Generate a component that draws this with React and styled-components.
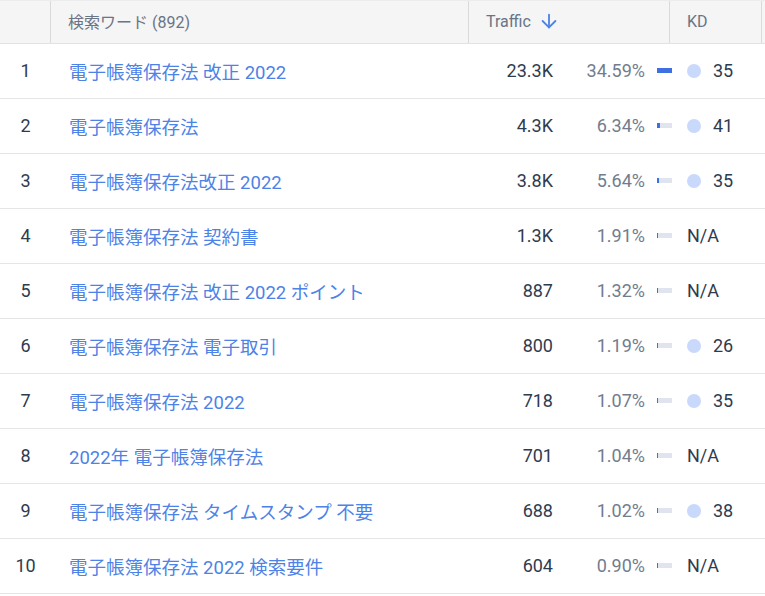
import React from 'react';
import styled, { createGlobalStyle } from 'styled-components';
import { ArrowDown } from 'lucide-react';

const GlobalStyle = createGlobalStyle`
  body {
    margin: 0;
    background: #fff;
    font-family: Roboto, "Noto Sans CJK JP", sans-serif;
  }
`;

const Table = styled.div`
  width: 765px;
  font-family: Roboto, "Noto Sans CJK JP", sans-serif;
`;

const HeaderRow = styled.div`
  display: grid;
  grid-template-columns: 51px 418px 201px 92px 1fr;
  height: 44px;
  box-sizing: border-box;
  background: #f5f5f5;
  border-top: 1px solid #ececec;
  border-bottom: 1px solid #e2e2e2;
`;

const HeadCell = styled.div`
  display: flex;
  align-items: center;
  gap: 7px;
  padding-left: 17px;
  padding-bottom: 2px;
  border-right: ${(p) => (p.$last ? 'none' : '1px solid #dadada')};
  font-size: 16px;
  font-weight: 400;
  color: #6a7484;
`;

const Row = styled.div`
  display: grid;
  grid-template-columns: 51px 1fr 84px 92px 42px 78px;
  align-items: center;
  height: 55px;
  box-sizing: border-box;
  padding-bottom: 1px;
  border-bottom: 1px solid #e6e6e6;
  font-size: 18.5px;
`;

const Num = styled.div`
  text-align: center;
  color: #2f3b4e;
  font-size: 18px;
`;

const Keyword = styled.a`
  padding-left: 18px;
  color: #4d82e6;
  text-decoration: none;
  white-space: nowrap;
`;

const Traffic = styled.div`
  text-align: right;
  color: #2f3b4e;
  font-size: 18px;
`;

const Pct = styled.div`
  text-align: right;
  color: #717d8e;
  font-size: 18px;
`;

const BarCell = styled.div`
  padding-left: 12px;
  display: flex;
  align-items: center;
`;

const Bar = styled.div`
  width: 15px;
  height: 5px;
  background: #dfe4ee;
  display: flex;
`;

const BarFill = styled.div`
  height: 100%;
  background: #3e70e2;
`;

const Kd = styled.div`
  display: flex;
  align-items: center;
  gap: 12px;
  color: #2f3b4e;
  font-size: 18px;
`;

const Dot = styled.span`
  width: 14px;
  height: 14px;
  border-radius: 50%;
  background: #c8d9fb;
`;

const rows = [
  ['電子帳簿保存法 改正 2022', '23.3K', 34.59, 35],
  ['電子帳簿保存法', '4.3K', 6.34, 41],
  ['電子帳簿保存法改正 2022', '3.8K', 5.64, 35],
  ['電子帳簿保存法 契約書', '1.3K', 1.91, null],
  ['電子帳簿保存法 改正 2022 ポイント', '887', 1.32, null],
  ['電子帳簿保存法 電子取引', '800', 1.19, 26],
  ['電子帳簿保存法 2022', '718', 1.07, 35],
  ['2022年 電子帳簿保存法', '701', 1.04, null],
  ['電子帳簿保存法 タイムスタンプ 不要', '688', 1.02, 38],
  ['電子帳簿保存法 2022 検索要件', '604', 0.9, null],
];

const App = () => {
  const max = rows[0][2];
  return (
    <Table>
      <GlobalStyle />
      <HeaderRow>
        <HeadCell />
        <HeadCell>検索ワード (892)</HeadCell>
        <HeadCell>
          Traffic
          <ArrowDown size={22} color="#4d82e6" strokeWidth={2} />
        </HeadCell>
        <HeadCell>KD</HeadCell>
        <HeadCell $last />
      </HeaderRow>
      {rows.map(([kw, traffic, pct, kd], i) => (
        <Row key={i}>
          <Num>{i + 1}</Num>
          <Keyword href="#">{kw}</Keyword>
          <Traffic>{traffic}</Traffic>
          <Pct>{pct.toFixed(2)}%</Pct>
          <BarCell>
            <Bar>
              <BarFill style={{ width: Math.max(1, Math.round((pct / max) * 15)) }} />
            </Bar>
          </BarCell>
          <Kd>
            {kd == null ? 'N/A' : (
              <>
                <Dot />
                {kd}
              </>
            )}
          </Kd>
        </Row>
      ))}
    </Table>
  );
};

export default App;
